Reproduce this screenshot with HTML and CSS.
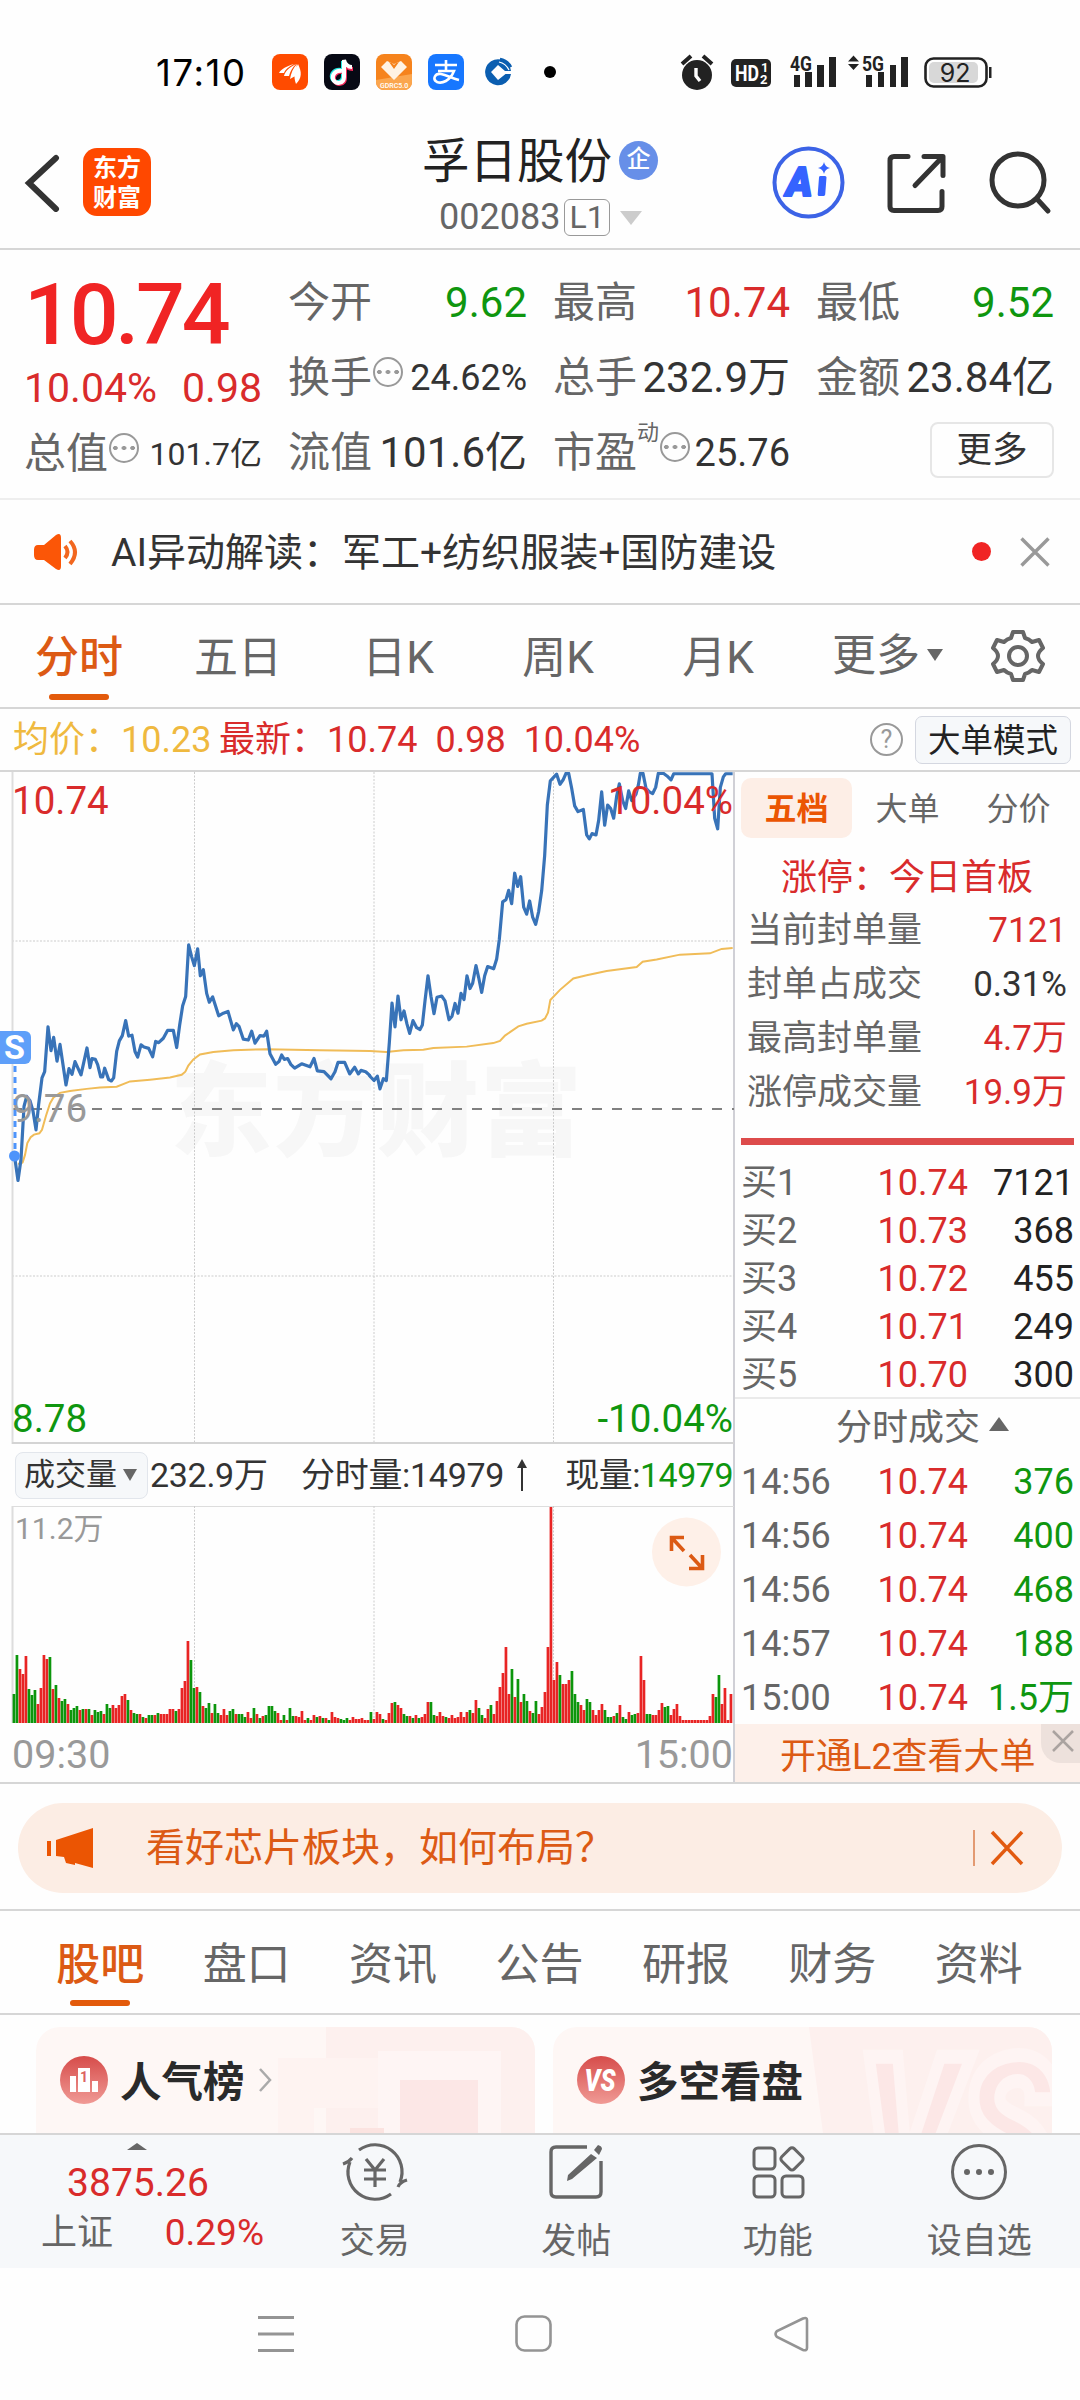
FILE: index.html
```html
<!DOCTYPE html>
<html lang="zh-CN">
<head>
    <meta charset="UTF-8">
    <meta name="viewport" content="width=device-width, initial-scale=1.0">
    <title>孚日股份 002083</title>
    <link rel="stylesheet" href="styles.css">
</head>
<body>

<!-- system status bar -->
<div class="status">
    <span class="clock">17:10</span>
    <div class="apps">
        <svg width="36" height="36" viewBox="0 0 36 36"><rect width="36" height="36" rx="8" fill="#ff4b00"/><path d="M7 19c2-4 8-7 15-9-6 3-9 6-10 9zM12 22c1-5 6-9 12-12-4 4-6 8-7 12zM18 25c1-6 3-11 7-15-1 5-1 8 0 11zM24 30c-3-8-1-14 2-20 4 8 4 14-2 20z" fill="#fff"/></svg>
        <svg width="36" height="36" viewBox="0 0 36 36"><rect width="36" height="36" rx="8" fill="#070914"/><g fill="none" stroke-width="4"><path d="M17 16c-7-1-10 4-9 8 2 6 11 5 11-2V7c1 4 4 6 8 6" stroke="#25e8e2"/><path d="M19 18c-7-1-10 4-9 8 2 6 11 5 11-2V9c1 4 4 6 8 6" stroke="#f5295a"/><path d="M18 17c-7-1-10 4-9 8 2 6 11 5 11-2V6c1 4 4 7 8 7" stroke="#fff"/></g></svg>
        <svg width="36" height="36" viewBox="0 0 36 36"><rect width="36" height="36" rx="8" fill="#f6831c"/><path d="M0 26l36-6v8a8 8 0 0 1-8 8H8a8 8 0 0 1-8-8z" fill="#fba64e"/><path d="M5 13l6-6 7 3 7-3 6 6-13 13z" fill="#fff3e4"/><path d="M13 8l5 7 5-7-3 1-2 2-2-2z" fill="#f6831c"/><text x="18" y="34" class="tiny">GDRC5.0</text></svg>
        <svg width="36" height="36" viewBox="0 0 36 36"><rect width="36" height="36" rx="8" fill="#1777ff"/><g fill="none" stroke="#fff" stroke-width="2.6"><path d="M7 11h22M18 6v11M10 17h16c-4 10-12 13-17 11-5-3-2-9 4-8 6 1 10 4 18 6"/></g></svg>
        <svg width="36" height="36" viewBox="0 0 36 36"><path d="M21 5.500A13 13 0 1 0 31 20H25.500L18 26l-7-8 7-7 7 6h6q0-7-10-11.500z" fill="#0b5eb0"/><path d="M20 5c5 1 9 4 11 8" stroke="#0b5eb0" stroke-width="2.500" fill="none"/><path d="M19 8c5 1 8 4 10 8" stroke="#fff" stroke-width="1.200" fill="none"/></svg>
        <i class="more-dot"></i>
    </div>
    <svg class="signals" width="312" height="40" viewBox="680 53 312 40">
        <g fill="#222">
            <circle cx="697" cy="75" r="15"/>
            <path d="M682 64l9-8M712 64l-9-8" stroke="#222" stroke-width="4"/>
            <path d="M696 68v8l4 5" stroke="#fff" stroke-width="3.4" fill="none"/>
            <rect x="731" y="59" width="40" height="28" rx="5"/>
            <path d="M794 75h6v12h-6zM805 72h7v15h-7zM817 65h7v22h-7zM829 57h7v30h-7z"/>
            <path d="M866 75h6v12h-6zM878 72h6v15h-6zM890 65h6v22h-6zM901 57h7v30h-7z"/>
            <path d="M848 61.500h11l-5.500-6zM848 64h11l-5.500 6z"/>
            <rect x="989" y="67" width="2.500" height="11"/>
        </g>
        <rect x="925.500" y="58.500" width="61" height="28" rx="8" fill="#fff" stroke="#222" stroke-width="2.600"/>
        <rect x="929" y="62" width="49" height="21" rx="5" fill="#d8d8d8"/>
        <text x="735" y="80.500" class="hd" textLength="24" lengthAdjust="spacingAndGlyphs">HD</text>
        <text x="761" y="72" class="hd-n">1</text><text x="760" y="84" class="hd-n">2</text>
        <text x="790" y="70.500" class="net" textLength="22" lengthAdjust="spacingAndGlyphs">4G</text>
        <text x="862" y="70.500" class="net" textLength="22" lengthAdjust="spacingAndGlyphs">5G</text>
        <text x="955" y="82" class="batt">92</text>
    </svg>
</div>

<header class="header">
    <svg class="back" width="36" height="60" viewBox="0 0 36 60"><path d="M32 6L5 31l27 26" fill="none" stroke="#333" stroke-width="6" stroke-linecap="round"/></svg>
    <div class="logo">东方<br>财富</div>
    <div class="title">
        <div class="name">孚日股份<span class="qi">企</span></div>
        <div class="code">002083<span class="l1">L1</span><i class="tri-down light"></i></div>
    </div>
    <svg class="tools" width="288" height="76" viewBox="770 144 288 76" fill="none" stroke="#333" stroke-width="5" stroke-linecap="round" stroke-linejoin="round">
        <circle cx="808.500" cy="182.500" r="34" stroke="#3c63e6" stroke-width="4"/>
        <text x="786" y="196" class="ai">A</text>
        <path d="M820.500 177.500h4.500l-1.300 17h-4.500z" fill="#3563ff" stroke="#3563ff" stroke-width="3"/>
        <path d="M824 162q1 5 6 6-5 1-6 6-1-5-6-6 5-1 6-6z" fill="#3563ff" stroke="none"/>
        <path d="M908 156.500h-14q-4 0-4 4v46q0 4 4 4h44q4 0 4-4v-15M924 156.500h19v19M942 157.500l-27 28"/>
        <circle cx="1018" cy="180" r="26"/><path d="M1037 199l11 12"/>
    </svg>
</header>

<section class="quote">
    <div class="col first">
        <div class="price">10.74</div>
        <div class="row change red"><span>10.04%</span><span>0.98</span></div>
        <div class="row total"><label>总值<i class="dots"></i></label><span class="s32">101.7亿</span></div>
    </div>
    <div class="col">
        <div class="row"><label>今开</label><span class="green">9.62</span></div>
        <div class="row"><label>换手<i class="dots"></i></label><span class="s36">24.62%</span></div>
        <div class="row"><label>流值</label><span>101.6亿</span></div>
    </div>
    <div class="col">
        <div class="row"><label>最高</label><span class="red">10.74</span></div>
        <div class="row"><label>总手</label><span>232.9万</span></div>
        <div class="row"><label>市盈<sup>动</sup><i class="dots"></i></label><span class="s38">25.76</span></div>
    </div>
    <div class="col">
        <div class="row"><label>最低</label><span class="green">9.52</span></div>
        <div class="row"><label>金额</label><span>23.84亿</span></div>
        <div class="row end"><span class="btn-more">更多</span></div>
    </div>
</section>

<div class="notice">
    <svg width="46" height="40" viewBox="0 0 46 40"><path d="M5 13h6L23 3q5-3 5 3v28q0 6-5 3L11 28H5q-4 0-4-5v-5q0-5 4-5z" fill="#fb5607"/><path d="M32 14q5 6 0 12M37 9q10 11 0 23" fill="none" stroke="#f2671f" stroke-width="4"/></svg>
    <span class="notice-text">AI异动解读：军工+纺织服装+国防建设</span>
    <i class="red-dot"></i>
    <svg width="30" height="30" viewBox="0 0 30 30"><path d="M1.500 1.500l27 27M28.500 1.500l-27 27" stroke="#999" stroke-width="3.400"/></svg>
</div>

<nav class="period">
    <span class="active">分时</span>
    <span>五日</span>
    <span>日K</span>
    <span>周K</span>
    <span>月K</span>
    <span class="more">更多<i class="tri-down"></i></span>
    <svg width="54" height="54" viewBox="-27 -27 54 54" fill="none" stroke="#666" stroke-width="4" stroke-linejoin="round"><circle r="9"/><path d="M-5-24H5L7-18Q11-17 14-14L21-16 25-8Q20-4 20 0T25 8L21 16 14 14Q11 17 7 18L5 24H-5L-7 18Q-11 17-14 14L-21 16-25 8Q-20 4-20 0T-25-8L-21-16-14-14Q-11-17-7-18z"/></svg>
</nav>

<div class="info">
    <span class="avg">均价：10.23</span>
    <span class="last">最新：10.74</span>
    <span class="last">0.98</span>
    <span class="last">10.04%</span>
    <i class="help">?</i>
    <span class="mode">大单模式</span>
</div>

<main class="main">
    <div class="charts">
        <svg class="price-chart" width="734" height="672" viewBox="0 0 734 672">
            <text x="170" y="376" class="watermark" textLength="412">东方财富</text>
            <g stroke="#ccc" stroke-width="1" stroke-dasharray="2 1.500" fill="none">
                <path d="M194.500 0v672M374 0v672M553.500 0v672M12 169h722M12 504h722"/>
            </g>
            <path d="M12 337h722" stroke="#808080" stroke-width="2" stroke-dasharray="10 10"/>
            <path d="M12.500 0v672" stroke="#ddd" stroke-width="2"/>
            <path d="M12 671h722" stroke="#d4d4d4" stroke-width="2"/>
            <g class="avg-line">
                <path transform="translate(0 -11) scale(.33333 .4401)" d="M54 915H62L68 912 75 895 82 868 92 855 102 849 118 846 126 838 138 806 150 778 160 765 180 754 210 750 260 745 300 742 350 740 390 728 450 724 510 719 545 713 556 706 565 692 580 678 600 667 640 661 700 657 800 655 960 657 1110 659"/>
                <path transform="translate(360 -11) scale(.33333 .4401)" d="M30 659L79 661 130 657 190 656 220 652 320 649 400 641 420 636 435 624 475 603 500 597 545 590 555 585 564 572 571 543 600 520 640 494 680 487 740 477 830 468 848 456 890 451 960 440 1050 437 1085 427 1118 425"/>
            </g>
            <g class="price-line">
                <path transform="translate(0 -11) scale(.33333 .4401)" d="M44 900L54 953 63 905 72 785 80 762 90 772 99 795 108 838 116 780 126 720 134 706 144 604 153 658 161 628 171 682 180 644 189 690 198 736 207 699 216 712 225 683 243 713 261 652 270 697 276 676 286 678 293 690 302 718 308 718 314 698 326 724 334 727 341 720 350 660 358 636 367 624 377 590 386 625 396 623 405 660 413 673 423 645 432 650 446 653 458 672 467 637 476 640 490 630 503 612 520 612 530 651 539 600 548 556 557 535 566 418 575 445 583 465 593 427 601 488 610 474 620 528 628 548 638 536 656 579 670 573 684 569 700 611 709 597 717 603 730 632 745 634 755 614 765 641 780 624 792 625 800 614 810 665 827 689 837 683 845 668 853 678 863 676 873 690 884 698 905 688 930 695 942 676 952 704 972 706 993 722 1005 706 1014 685 1034 685 1049 711 1064 696 1075 711 1083 703 1097 706 1110 715"/>
                <path transform="translate(360 -11) scale(.33333 .4401)" d="M28 714L32 718 42 726 52 716 60 745 70 722 79 726 88 640 96 550 105 604 114 534 123 588 132 568 141 598 149 619 159 590 170 606 180 610 187 600 195 545 204 488 213 535 222 574 231 537 245 534 255 545 267 588 276 580 285 551 294 573 303 528 312 542 321 488 330 517 338 505 348 465 356 492 365 526 374 488 383 467 401 472 410 450 418 405 428 320 438 315 446 294 455 324 464 255 473 285 482 263 491 332 500 348 509 318 518 355 527 371 536 342 545 295 554 215 562 100 571 45 580 38 590 30 600 53 610 42 618 28 626 28 635 62 644 102 654 115 670 110 680 168 688 177 696 165 708 168 716 135 725 70 734 146 743 100 752 108 761 130 770 80 778 52 788 90 797 108 806 68 815 90 828 75 835 55 841 28 849 28 858 62 868 70 878 74 887 60 895 28 910 28 921 34 933 43 941 29 1056 29 1064 130 1073 154 1081 60 1090 36 1097 29 1118 29"/>
            </g>
            <g class="axis">
                <text x="12" y="42" fill="#d92b2b">10.74</text>
                <text x="733" y="42" fill="#d92b2b" text-anchor="end">10.04%</text>
                <text x="12" y="350" fill="#999">9.76</text>
                <text x="12" y="660" fill="#0f960f">8.78</text>
                <text x="733" y="660" fill="#0f960f" text-anchor="end">-10.04%</text>
            </g>
            <!-- sell marker -->
            <path d="M15 294v84" stroke="#4d94fb" stroke-width="3" stroke-dasharray="6 5"/>
            <circle cx="14.500" cy="384" r="5.500" fill="#4d94fb"/>
            <rect x="-5" y="259" width="36" height="33" rx="6" fill="#5e9ff9"/>
            <text x="14.500" y="286.500" class="sell">S</text>
        </svg>

        <div class="vol-info">
            <span class="vol-btn">成交量<i class="tri-down"></i></span>
            <span class="total-vol">232.9万</span>
            <span class="minute">分时量:14979</span>
            <svg width="12" height="32" viewBox="0 0 12 32"><path d="M6 8v24" stroke="#333" stroke-width="2"/><path d="M1 9L6 0l5 9z" fill="#333"/></svg>
            <span class="now">现量:<b>14979</b></span>
        </div>

        <svg class="vol-chart" width="734" height="218" viewBox="0 0 734 218">
            <path d="M12 .5h722" stroke="#ddd"/>
            <path d="M12.500 0v217" stroke="#ddd" stroke-width="2"/>
            <path d="M194.500 0v217M374 0v217M553.500 0v217" stroke="#ccc" stroke-dasharray="2 1.500"/>
            <g id="bars"></g>
            <text x="15" y="33" class="vol-max">11.2万</text>
            <circle cx="686.500" cy="46" r="34.500" fill="#fef0e8"/>
            <g fill="none" stroke="#dc5a14" stroke-width="3.600"><path d="M684 31.500h-12.500V45M672 32l12 13M689 62.500h13.500V49M702 62L690 49"/></g>
        </svg>
        <div class="hours"><span>09:30</span><span>15:00</span></div>
    </div>

    <aside class="book">
        <div class="book-tabs"><span class="on">五档</span><span>大单</span><span>分价</span></div>
        <div class="limit">涨停：今日首板</div>
        <div class="stat"><label>当前封单量</label><span class="red">7121</span></div>
        <div class="stat"><label>封单占成交</label><span>0.31%</span></div>
        <div class="stat"><label>最高封单量</label><span class="red">4.7万</span></div>
        <div class="stat"><label>涨停成交量</label><span class="red">19.9万</span></div>
        <div class="divider"></div>
        <div class="bid"><label>买1</label><span class="red">10.74</span><span>7121</span></div>
        <div class="bid"><label>买2</label><span class="red">10.73</span><span>368</span></div>
        <div class="bid"><label>买3</label><span class="red">10.72</span><span>455</span></div>
        <div class="bid"><label>买4</label><span class="red">10.71</span><span>249</span></div>
        <div class="bid"><label>买5</label><span class="red">10.70</span><span>300</span></div>
        <div class="ticks-title">分时成交<i class="tri-up"></i></div>
        <div class="tick"><label>14:56</label><span class="red">10.74</span><span class="green">376</span></div>
        <div class="tick"><label>14:56</label><span class="red">10.74</span><span class="green">400</span></div>
        <div class="tick"><label>14:56</label><span class="red">10.74</span><span class="green">468</span></div>
        <div class="tick"><label>14:57</label><span class="red">10.74</span><span class="green">188</span></div>
        <div class="tick"><label>15:00</label><span class="red">10.74</span><span class="green">1.5万</span></div>
        <div class="l2">开通L2查看大单
            <span class="l2-close"><svg width="22" height="22" viewBox="0 0 22 22"><path d="M1 1l20 20M21 1L1 21" stroke="#aaa3a0" stroke-width="2.500"/></svg></span>
        </div>
    </aside>
</main>

<div class="promo">
    <div class="pill">
        <svg width="46" height="40" viewBox="0 0 46 40" fill="#eb5503"><path d="M0 13h4v15H0zM9 12L46 0v40l-18-5v2l-9-2-2-6-8-1z"/></svg>
        <span class="promo-text">看好芯片板块，如何布局？</span>
        <i class="bar"></i>
        <svg width="34" height="36" viewBox="0 0 34 36"><path d="M2 2l30 32M32 2L2 34" stroke="#e25a10" stroke-width="3.500"/></svg>
    </div>
</div>

<nav class="sections">
    <span class="active">股吧</span>
    <span>盘口</span>
    <span>资讯</span>
    <span>公告</span>
    <span>研报</span>
    <span>财务</span>
    <span>资料</span>
</nav>

<div class="cards">
    <div class="card">
        <svg class="card-bg" width="499" height="106" viewBox="0 0 499 106"><path d="M290 0h209v106H290z" fill="#fdf0ee"/><path d="M242 31h100v50h-64v25h-36z" fill="#fef3f1"/><path d="M342 24h123v82H342z" fill="#fef5f4"/><path d="M364 53h78v53h-78z" fill="#fce7e6"/><path d="M314 101h34v5h-34z" fill="#fbe3e0"/></svg>
        <svg width="48" height="48" viewBox="0 0 48 48"><defs><linearGradient id="rg" x2="0" y2="1"><stop stop-color="#d64c4a"/><stop offset="1" stop-color="#f09a95"/></linearGradient></defs><circle cx="24" cy="24" r="24" fill="url(#rg)"/><path d="M10 20h6v16h-6zM18 12h12v24H18zM32 25h6v11h-6z" fill="#fff"/><text x="24" y="26" class="rank">1</text></svg>
        <h3>人气榜</h3>
        <svg width="14" height="24" viewBox="0 0 14 24"><path d="M2 1l10 11L2 23" fill="none" stroke="#aaa" stroke-width="2.500"/></svg>
    </div>
    <div class="card">
        <svg class="card-bg" width="499" height="106" viewBox="0 0 499 106"><path d="M256 0h243v106H270z" fill="#fdf0ee"/><text x="306" y="172" class="vs-big" textLength="196" lengthAdjust="spacingAndGlyphs">VS</text></svg>
        <svg width="48" height="48" viewBox="0 0 48 48"><circle cx="24" cy="24" r="24" fill="url(#rg)"/><text x="23" y="35" class="vs" textLength="31" lengthAdjust="spacingAndGlyphs">VS</text></svg>
        <h3>多空看盘</h3>
    </div>
</div>

<footer class="bottom">
    <div class="index">
        <i class="tri-up"></i>
        <div class="point">3875.26</div>
        <div class="idx-row"><label>上证</label><span>0.29%</span></div>
    </div>
    <div class="item">
        <svg width="66" height="60" viewBox="-33 -30 66 60" fill="none" stroke="#666" stroke-width="3.200"><path d="M-16-22A27 27 0 0 1 25 10M16 22A27 27 0 0 1-25-10M-32-8q6-2 9-6M32 8q-7 2-9 7M-9-13L0-2 9-13M-11-2H11M-11 7H11M0-2V15"/></svg>
        <span>交易</span>
    </div>
    <div class="item">
        <svg width="60" height="60" viewBox="-30 -30 60 60"><path d="M11-25H-20q-5 0-5 5V20q0 5 5 5H20q5 0 5-5V-11" fill="none" stroke="#666" stroke-width="3.400"/><path d="M15-18l6 4L-4 7-9 9-8 3zM18-22l4-5q4 1 4 4l-3 6z" fill="#666"/></svg>
        <span>发帖</span>
    </div>
    <div class="item">
        <svg width="60" height="60" viewBox="-30 -30 60 60" fill="none" stroke="#666" stroke-width="3"><rect x="-24" y="-24" width="21" height="21" rx="4"/><rect x="-24" y="4" width="21" height="21" rx="4"/><rect x="4" y="4" width="21" height="21" rx="4"/><rect x="5.500" y="-22" width="17.500" height="17.500" rx="3" transform="rotate(45 14 -13.500)"/></svg>
        <span>功能</span>
    </div>
    <div class="item">
        <svg width="60" height="60" viewBox="-30 -30 60 60"><circle r="26.500" fill="none" stroke="#666" stroke-width="3"/><g fill="#666"><circle cx="-12" r="3"/><circle r="3"/><circle cx="12" r="3"/></g></svg>
        <span>设自选</span>
    </div>
</footer>

<div class="sysnav">
    <svg width="38" height="38" viewBox="0 0 38 38"><path d="M1 2.500h36M1 19h36M1 35.500h36" stroke="#949494" stroke-width="3"/></svg>
    <svg width="38" height="38" viewBox="0 0 38 38"><rect x="1.500" y="1.500" width="34" height="34" rx="8" fill="none" stroke="#949494" stroke-width="2.600"/></svg>
    <svg width="38" height="38" viewBox="0 0 38 38"><path d="M30 3.500L4 16q-3 3 0 6l26 13q4 1 4-2V5q0-3-4-1.500z" fill="none" stroke="#949494" stroke-width="2.600"/></svg>
</div>

<script src="script.js"></script>
</body>
</html>
```
FILE: styles.css
```css
* {
    box-sizing: border-box;
}
body {
    margin: 0;
    width: 1080px;
    height: 2400px;
    overflow: hidden;
    background: #fefefe;
    color: #333;
    font-family: Roboto, "Noto Sans CJK SC", sans-serif;
    font-size: 36px;
    line-height: 1.2;
    white-space: nowrap;
}
i {
    font-style: normal;
}
svg {
    display: block;
    flex: none;
}
.red {
    color: #d92b2b;
}
.green {
    color: #0f960f;
}
.tri-down {
    border: 8px solid transparent;
    border-top: 12px solid #666;
    border-bottom: 0;
}
.tri-up {
    border: 10px solid transparent;
    border-bottom: 14px solid #666;
    border-top: 0;
}

/* status bar */
.status {
    display: flex;
    align-items: flex-start;
    height: 110px;
    padding: 54px 88px 0 156px;
}
.clock {
    width: 116px;
    font: 400 36.5px/38px Inter, sans-serif;
    letter-spacing: 1.6px;
    color: #000;
}
.apps {
    display: flex;
    align-items: center;
    gap: 16px;
}
.more-dot {
    width: 12px;
    height: 12px;
    margin-left: 12px;
    border-radius: 50%;
    background: #000;
}
.signals {
    margin: -1px 0 0 auto;
}
.tiny {
    font: 500 7px Roboto, sans-serif;
    fill: #fff;
    text-anchor: middle;
}
.hd {
    font: 700 22px Roboto, sans-serif;
    fill: #fff;
}
.hd-n {
    font: 700 13px Roboto, sans-serif;
    fill: #fff;
}
.net {
    font: 700 21px Roboto, sans-serif;
    fill: #222;
}
.batt {
    font: 400 25px Inter, sans-serif;
    fill: #222;
    text-anchor: middle;
}

/* header */
.header {
    display: flex;
    height: 140px;
    padding: 0 22px 0 24px;
    border-bottom: 2px solid #d6d6d6;
}
.back {
    margin-top: 42px;
}
.logo {
    width: 68px;
    height: 68px;
    margin: 38px 0 0 23px;
    padding-top: 5px;
    border-radius: 14px;
    background: #ff4800;
    color: #fff;
    font-size: 24px;
    font-weight: 700;
    line-height: 30px;
    text-align: center;
}
.title {
    width: 400px;
    margin-left: 177px;
    padding-left: 94px;
}
.name {
    display: flex;
    align-items: center;
    height: 62px;
    margin-top: 21px;
    font-size: 47.5px;
    color: #222;
}
.qi {
    width: 39px;
    height: 39px;
    margin: -3px 0 0 7px;
    border-radius: 50%;
    background: #678fe8;
    color: #fff;
    font-size: 24px;
    font-weight: 500;
    line-height: 36px;
    text-align: center;
}
.code {
    display: flex;
    align-items: center;
    height: 48px;
    padding: 1px 0 0 17px;
    color: #666;
}
.l1 {
    height: 37px;
    margin-left: 4px;
    padding: 0 4px;
    border: 1.5px solid #999;
    border-radius: 6px;
    font-size: 32px;
    line-height: 35px;
}
.tri-down.light {
    margin-left: 10px;
    border-width: 14px 11px 0;
    border-top-color: #ccc;
}
.tools {
    margin: 34px 0 0 auto;
}
.ai {
    font: italic 900 40px Roboto, sans-serif;
    fill: #3563ff;
    stroke: #3563ff;
    stroke-width: 2px;
}

/* quote */
.quote {
    display: grid;
    grid-template-columns: 238px 239px 237px 238px;
    column-gap: 26px;
    height: 250px;
    padding: 16px 0 0 24px;
    border-bottom: 2px solid #eee;
    font-size: 42px;
}
.row {
    display: flex;
    align-items: center;
    justify-content: space-between;
    height: 75px;
}
.row label {
    display: flex;
    align-items: center;
    color: #666;
}
.price {
    height: 95px;
    padding-top: 5px;
    color: #f02424;
    font-size: 86px;
    font-weight: 500;
    letter-spacing: -3.2px;
    line-height: 88px;
}
.change {
    height: 56px;
    font-size: 41px;
}
.s32 {
    font-size: 32px;
}
.s36 {
    font-size: 36px;
}
.s38 {
    font-size: 38px;
}
.dots {
    width: 30px;
    height: 30px;
    margin: -12px 0 0 1px;
    border: 2px solid #999;
    border-radius: 50%;
    background: radial-gradient(circle, #999 2px, transparent 2.5px) 0 0 / 8.6px 26px round;
}
.row sup {
    align-self: flex-start;
    margin-top: -8px;
    font-size: 22px;
}
.row.end {
    justify-content: flex-end;
}
.btn-more {
    width: 124px;
    height: 56px;
    margin-top: -8px;
    border: 2px solid #e6e6e6;
    border-radius: 8px;
    font-size: 35.5px;
    line-height: 52px;
    text-align: center;
}

/* notice */
.notice {
    display: flex;
    align-items: center;
    height: 105px;
    padding: 0 30px 0 33px;
    border-bottom: 2px solid #d6d6d6;
    font-size: 39px;
}
.notice-text {
    margin-left: 32px;
    padding-top: 3px;
}
.red-dot {
    width: 19px;
    height: 19px;
    margin: 0 29px 0 auto;
    border-radius: 50%;
    background: #f02424;
}

/* period tabs */
.period {
    display: flex;
    align-items: center;
    height: 104px;
    border-bottom: 2px solid #d6d6d6;
    color: #666;
    font-size: 44px;
}
.period span {
    position: relative;
    width: 160px;
    height: 104px;
    line-height: 109px;
    text-align: center;
}
.period .active,
.sections .active {
    color: #dc5a14;
    font-weight: 500;
}
.period span:first-child {
    width: 158px;
}
.period .active::after,
.sections .active::after {
    content: "";
    position: absolute;
    bottom: 8px;
    left: 50%;
    width: 60px;
    height: 6px;
    margin-left: -30px;
    border-radius: 3px;
    background: #e35a0b;
}
.period .more {
    display: flex;
    align-items: center;
    width: 193px;
    padding-left: 34px;
}
.more .tri-down {
    margin: -2px 0 0 7px;
}

/* info line */
.info {
    display: flex;
    align-items: center;
    height: 63px;
    padding: 0 9px 0 13px;
    border-bottom: 2px solid #d6d6d6;
    font-size: 36px;
}
.avg {
    width: 206px;
    padding-top: 3px;
    color: #efb93f;
}
.last {
    margin-right: 18px;
    padding-top: 3px;
    color: #d92b2b;
}
.help {
    width: 33px;
    height: 33px;
    margin: 0 12px 0 auto;
    border: 2px solid #999;
    border-radius: 50%;
    color: #999;
    font-size: 25px;
    line-height: 29px;
    text-align: center;
}
.mode {
    width: 156px;
    height: 48px;
    border: 1.5px solid #d4d7e0;
    border-radius: 7px;
    background: #f6f8fa;
    color: #222;
    font-size: 32.5px;
    line-height: 48px;
    text-align: center;
}

/* charts */
.main {
    display: flex;
    height: 1012px;
    border-bottom: 2px solid #d6d6d6;
}
.charts {
    width: 735px;
    border-right: 2px solid #d0d0d6;
}
.watermark {
    font: 900 102px "Noto Sans CJK SC", sans-serif;
    fill: #f7f7f7;
}
.avg-line path {
    fill: none;
    stroke: #f0bc58;
    stroke-width: 2px;
    vector-effect: non-scaling-stroke;
}
.price-line path {
    fill: none;
    stroke: #3873b8;
    stroke-width: 3.2px;
    stroke-linejoin: round;
    vector-effect: non-scaling-stroke;
}
.axis text {
    font: 38.5px Roboto, sans-serif;
}
.sell {
    font: 700 34px Roboto, sans-serif;
    fill: #fff;
    text-anchor: middle;
}
.vol-info {
    display: flex;
    align-items: center;
    height: 62px;
    padding-left: 15px;
    font-size: 34px;
}
.vol-btn {
    display: flex;
    align-items: center;
    width: 133px;
    height: 47px;
    margin-right: 2px;
    padding-left: 8px;
    border: 1.5px solid #e2e6ec;
    border-radius: 8px;
    background: #f6f8fa;
    font-size: 31px;
}
.vol-btn .tri-down {
    margin-left: 6px;
    border-width: 12px 7px 0;
}
.total-vol {
    width: 120px;
    letter-spacing: -0.3px;
}
.minute {
    margin: 0 12px 0 31px;
    letter-spacing: -0.3px;
}
.now {
    margin-left: auto;
    letter-spacing: -0.5px;
}
.now b {
    color: #0f960f;
    font-weight: 400;
}
.vol-max {
    font: 30px Roboto, "Noto Sans CJK SC", sans-serif;
    fill: #999;
}
.hours {
    display: flex;
    justify-content: space-between;
    height: 58px;
    padding: 0 0 0 12px;
    color: #999;
    font-size: 39.5px;
    line-height: 62px;
}

/* order book */
.book {
    width: 345px;
}
.book label {
    color: #666;
}
.book-tabs {
    display: flex;
    padding: 6px 6px 0;
    color: #666;
    font-size: 32px;
    line-height: 63px;
    text-align: center;
}
.book-tabs span {
    width: 111px;
    height: 60px;
}
.book-tabs .on {
    border-radius: 10px;
    background: #fdeee6;
    color: #eb5503;
    font-weight: 700;
}
.limit {
    height: 64px;
    padding-left: 46px;
    color: #d92b2b;
    font-size: 36px;
    line-height: 80px;
}
.stat {
    display: flex;
    justify-content: space-between;
    height: 54px;
    padding: 0 13px 0 12px;
    font-size: 35px;
    line-height: 58px;
}
.divider {
    height: 7px;
    margin: 20px 6px 12px;
    background: #dd4b4b;
}
.bid, .tick {
    display: grid;
    grid-template-columns: 1fr 94px 106px;
    height: 48px;
    padding: 0 6px;
    color: #222;
    line-height: 52px;
}
.bid span, .tick span {
    text-align: right;
}
.bid .red, .tick .red {
    color: #d92b2b;
}
.tick .green {
    color: #0f960f;
}
.ticks-title {
    display: flex;
    align-items: center;
    height: 57px;
    padding: 4px 0 0 101px;
    border-top: 2px solid #eaeaea;
    color: #666;
}
.ticks-title .tri-up {
    margin: -9px 0 0 9px;
}
.tick {
    height: 54px;
    line-height: 57px;
}
.l2 {
    position: relative;
    height: 58px;
    padding-left: 45px;
    background: #fdf0ea;
    color: #dc5a14;
    line-height: 66px;
}
.l2-close {
    position: absolute;
    top: 0;
    right: 0;
    width: 39px;
    height: 39px;
    padding: 6px 0 0 11px;
    border-bottom-left-radius: 20px;
    background: #ede1dc;
}

/* promo */
.promo {
    height: 127px;
    padding: 19px 18px 0;
    border-bottom: 2px solid #d6d6d6;
}
.pill {
    display: flex;
    align-items: center;
    height: 90px;
    padding: 0 38px 0 29px;
    border-radius: 45px;
    background: #fcede4;
    color: #dc5a14;
    font-size: 39px;
}
.promo-text {
    margin-left: 53px;
    padding-top: 1px;
}
.bar {
    width: 2px;
    height: 36px;
    margin: 0 15px 0 auto;
    background: #e39a72;
}

/* content tabs */
.sections {
    display: flex;
    height: 104px;
    padding: 0 28px 0 27px;
    border-bottom: 2px solid #d6d6d6;
    color: #666;
    font-size: 44px;
    line-height: 109px;
}
.sections span {
    position: relative;
    flex: 1;
    height: 103px;
    text-align: center;
}

/* cards */
.cards {
    display: flex;
    gap: 18px;
    height: 118px;
    padding: 12px 28px 0 36px;
}
.card {
    position: relative;
    display: flex;
    align-items: center;
    width: 499px;
    height: 106px;
    padding-left: 24px;
    overflow: hidden;
    border-radius: 24px 24px 0 0;
    background: #fef7f5;
}
.card > * {
    position: relative;
}
.card .card-bg {
    position: absolute;
    top: 0;
    left: 0;
}
.card h3 {
    margin: 0 13px 0 12px;
    padding-top: 6px;
    color: #2a2a2a;
    font-size: 41.5px;
    font-weight: 700;
}
.rank {
    font: 700 14px Roboto, sans-serif;
    fill: #dc6460;
    text-anchor: middle;
}
.vs {
    font: italic 900 31px Roboto, sans-serif;
    fill: #fff;
    text-anchor: middle;
}
.vs-big {
    font: italic 900 200px Roboto, sans-serif;
    fill: #fce7e6;
    stroke: #fef4f3;
    stroke-width: 14px;
}

/* bottom bar */
.bottom {
    display: flex;
    height: 135px;
    border-top: 2px solid #d6d6d6;
    background: #f6f8fa;
    color: #666;
}
.index {
    width: 274px;
    text-align: center;
}
.index .tri-up {
    display: block;
    width: 0;
    margin: 8px auto 0;
    border-width: 0 10px 7px;
}
.point {
    margin-top: 10px;
    padding-left: 2px;
    color: #d92b2b;
    font-size: 39px;
    line-height: 46px;
}
.idx-row {
    display: flex;
    justify-content: space-between;
    padding: 4px 10px 0 41px;
    line-height: 46px;
}
.idx-row span {
    color: #d92b2b;
    font-size: 37px;
}
.item {
    display: flex;
    flex-direction: column;
    align-items: center;
    width: 201.5px;
    padding-top: 7px;
    font-size: 35px;
}
.item span {
    margin-top: 19px;
}

.sysnav {
    display: flex;
    gap: 220px;
    padding: 47px 0 0 257px;
}
```
FILE: script.js
```js
// one entry per traded minute: r = up, g = down, number = bar height
const volume = `
g29 g68 r54 r49 r67 g34 g28 g33 r19 r35 r68 r64 g66 r34 g38 r25 g22 g24 r19 g13
g15 g17 r13 g14 r14 g14 r8 g13 g11 g12 r9 g19 g15 r18 r15 r18 r27 r29 g23 r13
g10 g9 r9 g6 r5 g8 g8 r8 g10 r9 r9 r9 r14 r14 g12 r14 r35 r42 r82 g63
g35 r36 g31 r17 g15 g20 r10 g19 g10 r8 r14 r8 g12 g14 r9 g9 g9 g6 r11 r5
g15 r9 g5 r7 g8 g17 g17 g12 r10 r3 g8 r3 g15 g7 r7 r6 r12 r3 g5 r3
r8 g6 r7 g5 r5 g3 r11 r6 r5 g4 g3 g5 r3 r6 r4 r4 r5 r3 r3 g11
r4 r11 r9 g4 r3 r10 r20 g21 r18 r15 g9 g7 r7 g5 r8 g5 r6 r9 r21 g21
g8 r7 r11 r7 g6 r5 r8 r5 r6 r11 r6 r11 g13 r10 r23 g15 g8 r5 r14 g18
r9 r22 r36 r50 r76 r29 g54 r26 g44 r21 g29 g22 r12 g10 g22 r9 r16 r31 r76 r216
r43 r61 g48 r39 r39 r43 g52 g29 g21 r18 r13 g24 g21 r13 r8 r13 r19 g13 g6 g6
r7 g10 r18 g6 g4 r11 g8 g9 r10 r67 r43 g9 g9 r8 r8 r13 r20 g16 g17 r8
r14 r19 r7 r3 r3 r3 r3 r3 r3 r3 r3 r3 r7 r29 g26 g48 r19 r35 r3 r29
`.trim().split(/\s+/);

const bars = document.getElementById('bars');
volume.forEach((v, i) => {
    const h = Number(v.slice(1));
    const rect = document.createElementNS('http://www.w3.org/2000/svg', 'rect');
    rect.setAttribute('x', 12.6 + i * 3);
    rect.setAttribute('y', 217 - h);
    rect.setAttribute('width', 2.7);
    rect.setAttribute('height', h);
    rect.setAttribute('fill', v[0] === 'r' ? '#e82424' : '#0c960c');
    bars.appendChild(rect);
});
```
